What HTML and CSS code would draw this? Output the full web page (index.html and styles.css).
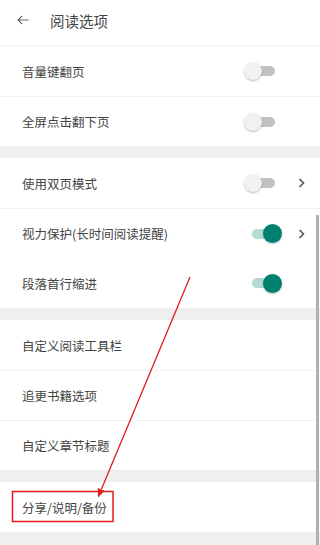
FILE: index.html
```html
<!DOCTYPE html>
<html lang="zh-CN">
<head>
<meta charset="utf-8">
<link rel="stylesheet" href="styles.css">
</head>
<body>
<div class="page">
  <header class="header">
    <svg class="back" width="12" height="10" viewBox="0 0 12 10"><path d="M11.5 5H1M5.2 0.8L1 5l4.2 4.2" fill="none" stroke="#666" stroke-width="1.2"/></svg>
    <span class="title">阅读选项</span>
  </header>

  <section class="group">
    <div class="row"><span class="label">音量键翻页</span><span class="switch off"><span class="track"></span><span class="thumb"></span></span></div>
    <div class="row divided"><span class="label">全屏点击翻下页</span><span class="switch off"><span class="track"></span><span class="thumb"></span></span></div>
  </section>

  <section class="group">
    <div class="row"><span class="label">使用双页模式</span><span class="switch off"><span class="track"></span><span class="thumb"></span></span><svg class="chev" width="8" height="10" viewBox="0 0 8 10"><path d="M1.5 1l4 4-4 4" fill="none" stroke="#555" stroke-width="1.6"/></svg></div>
    <div class="row divided"><span class="label">视力保护(长时间阅读提醒)</span><span class="switch on"><span class="track"></span><span class="thumb"></span></span><svg class="chev" width="8" height="10" viewBox="0 0 8 10"><path d="M1.5 1l4 4-4 4" fill="none" stroke="#555" stroke-width="1.6"/></svg></div>
    <div class="row"><span class="label">段落首行缩进</span><span class="switch on"><span class="track"></span><span class="thumb"></span></span><span class="chev-space"></span></div>
  </section>

  <section class="group">
    <div class="row"><span class="label">自定义阅读工具栏</span></div>
    <div class="row divided"><span class="label">追更书籍选项</span></div>
    <div class="row divided"><span class="label">自定义章节标题</span></div>
  </section>

  <section class="group">
    <div class="row"><span class="label">分享/说明/备份</span></div>
  </section>

  <div class="scrollbar"></div>

  <svg class="annot" width="320" height="545" viewBox="0 0 320 545">
    <line x1="190" y1="277" x2="101.5" y2="489" stroke="#e41b1b" stroke-width="1.3"/>
    <polygon points="98,497.5 104.6,490.8 97.8,488" fill="#e41b1b"/>
    <rect x="12.5" y="491.5" width="100.5" height="30" fill="none" stroke="#e41b1b" stroke-width="1.5"/>
  </svg>
</div>
</body>
</html>
```

FILE: styles.css
```css
html, body {
  margin: 0;
  padding: 0;
  background: #efefef;
}
body {
  font-family: "Noto Sans CJK SC", "Noto Sans", sans-serif;
  color: #444;
}
.page {
  position: relative;
  width: 320px;
  height: 545px;
  overflow: hidden;
  background: #efefef;
}
.header {
  height: 46px;
  box-sizing: border-box;
  border-bottom: 1px solid #f2f2f2;
  background: #fff;
  display: flex;
  align-items: center;
  padding-left: 17px;
  padding-bottom: 5px;
}
.back {
  display: block;
}
.title {
  margin-left: 21px;
  font-size: 14.5px;
  color: #444;
}
.group {
  background: #fff;
  margin-bottom: 12px;
}
.row {
  height: 50px;
  box-sizing: border-box;
  display: flex;
  align-items: center;
  padding-left: 22px;
}
.row.divided {
  border-top: 1px solid #f1f1f1;
}
.label {
  font-size: 12.5px;
  color: #444;
  flex: 1;
}
.switch {
  position: relative;
  width: 38px;
  height: 20px;
  margin-right: 38px;
}
.row .switch + .chev,
.row .switch + .chev-space {
  margin-left: -22px;
}
.switch .track {
  position: absolute;
  top: 5px;
  width: 28px;
  height: 10px;
  border-radius: 5px;
}
.switch .thumb {
  position: absolute;
  top: 1px;
  width: 18px;
  height: 18px;
  border-radius: 50%;
  box-shadow: 0 1px 2px rgba(0,0,0,0.25);
}
.switch.off .track {
  left: 3px;
  background: #c2c2c2;
}
.switch.off .thumb {
  left: 0;
  background: #f1f1f1;
}
.switch.on .track {
  left: 8px;
  background: #b3dbd5;
}
.switch.on .thumb {
  left: 19px;
  width: 19px;
  height: 19px;
  top: 0.5px;
  background: #00806f;
}
.chev {
  display: block;
  margin-right: 14px;
}
.chev-space {
  width: 8px;
  margin-right: 14px;
}
.scrollbar {
  position: absolute;
  left: 316px;
  top: 215px;
  width: 3px;
  height: 330px;
  background: #b0b0b0;
}
.annot {
  position: absolute;
  left: 0;
  top: 0;
  pointer-events: none;
}
```
